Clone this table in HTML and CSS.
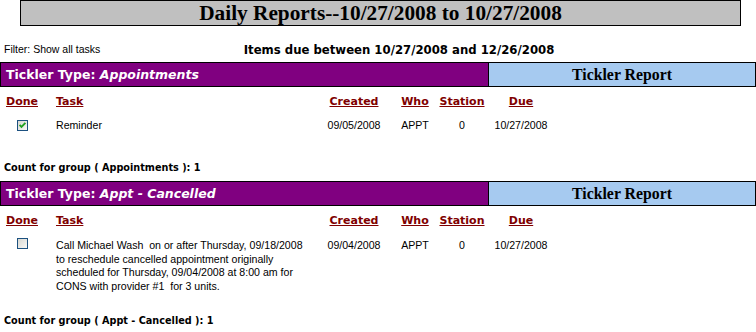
FILE: index.html
```html
<!DOCTYPE html>
<html>
<head>
<meta charset="utf-8">
<link rel="stylesheet" href="styles.css">
</head>
<body>
<div class="title">Daily Reports--10/27/2008 to 10/27/2008</div>
<div class="subhead">
  <div class="filter">Filter: Show all tasks</div>
  <div class="items">Items due between 10/27/2008 and 12/26/2008</div>
</div>

<div class="group first">
  <div class="bar">
    <div class="type">Tickler Type: <i>Appointments</i></div>
    <div class="report">Tickler Report</div>
  </div>
  <div class="grid heads">
    <div class="c"><u>Done</u></div>
    <div class="task"><u>Task</u></div>
    <div class="c"><u>Created</u></div>
    <div class="c"><u>Who</u></div>
    <div class="c"><u>Station</u></div>
    <div class="c"><u>Due</u></div>
    <div></div>
  </div>
  <div class="grid row">
    <div class="done"><svg class="cb" width="11" height="11" viewBox="0 0 11 11"><defs><linearGradient id="g1" x1="0" y1="0" x2="1" y2="1"><stop offset="0" stop-color="#d6d6d0"/><stop offset="1" stop-color="#fafaf8"/></linearGradient></defs><rect x="0.5" y="0.5" width="10" height="10" fill="url(#g1)" stroke="#1c5180"/><polyline points="2.6,4.8 4.5,6.8 8.4,2.9" fill="none" stroke="#21a121" stroke-width="1.9"/></svg></div>
    <div class="task">Reminder</div>
    <div class="c">09/05/2008</div>
    <div class="c">APPT</div>
    <div class="c">0</div>
    <div class="c">10/27/2008</div>
    <div></div>
  </div>
  <div class="count">Count for group ( Appointments ): 1</div>
</div>

<div class="group second">
  <div class="bar">
    <div class="type">Tickler Type: <i>Appt - Cancelled</i></div>
    <div class="report">Tickler Report</div>
  </div>
  <div class="grid heads">
    <div class="c"><u>Done</u></div>
    <div class="task"><u>Task</u></div>
    <div class="c"><u>Created</u></div>
    <div class="c"><u>Who</u></div>
    <div class="c"><u>Station</u></div>
    <div class="c"><u>Due</u></div>
    <div></div>
  </div>
  <div class="grid row">
    <div class="done"><svg class="cb" width="11" height="11" viewBox="0 0 11 11"><defs><linearGradient id="g2" x1="0" y1="0" x2="1" y2="1"><stop offset="0" stop-color="#d6d6d0"/><stop offset="1" stop-color="#fafaf8"/></linearGradient></defs><rect x="0.5" y="0.5" width="10" height="10" fill="url(#g2)" stroke="#1c5180"/></svg></div>
    <div class="task">Call Michael Wash&nbsp; on or after Thursday, 09/18/2008 to reschedule cancelled appointment originally scheduled for Thursday, 09/04/2008 at 8:00 am for CONS with provider #1&nbsp; for 3 units.</div>
    <div class="c">09/04/2008</div>
    <div class="c">APPT</div>
    <div class="c">0</div>
    <div class="c">10/27/2008</div>
    <div></div>
  </div>
  <div class="count">Count for group ( Appt - Cancelled ): 1</div>
</div>
</body>
</html>
```

FILE: styles.css
```css
html, body {
  margin: 0;
  padding: 0;
  background: #ffffff;
}
body {
  font-family: "Liberation Sans", Arial, sans-serif;
  font-size: 11px;
  color: #000;
}
.title {
  margin: 0 15px 0 20px;
  height: 24px;
  border: 1px solid #000;
  background: #c0c0c0;
  font-family: "Liberation Serif", "Times New Roman", serif;
  font-weight: bold;
  font-size: 21.3px;
  line-height: 25px;
  text-align: center;
}
.subhead {
  display: flex;
  align-items: center;
  height: 20px;
  margin-top: 14px;
}
.filter {
  width: 0;
  white-space: nowrap;
  padding-left: 4px;
  font-size: 10.5px;
  margin-top: -2px;
}
.items {
  flex: 1;
  text-align: center;
  font-family: "DejaVu Sans", Verdana, sans-serif;
  font-weight: bold;
  font-size: 11.7px;
  padding-left: 38px;
}
.first {
  margin-top: 2px;
}
.bar {
  display: flex;
  height: 23px;
  border: 1px solid #000;
}
.type {
  width: 488px;
  background: #800080;
  color: #fff;
  font-family: "DejaVu Sans", Verdana, sans-serif;
  font-weight: bold;
  font-size: 12.5px;
  line-height: 24px;
  padding-left: 5px;
  box-sizing: border-box;
  border-right: 1px solid #000;
}
.report {
  flex: 1;
  background: #a6caf0;
  font-family: "Liberation Serif", "Times New Roman", serif;
  font-weight: bold;
  font-size: 15.8px;
  line-height: 24px;
  text-align: center;
}
.grid {
  display: grid;
  grid-template-columns: 44px 272px 76px 46px 48px 70px 1fr;
}
.heads {
  margin-top: 6px;
  height: 16px;
  align-items: center;
  color: #800000;
  font-family: "DejaVu Sans", Verdana, sans-serif;
  font-weight: bold;
  font-size: 11px;
}
.heads u {
  text-decoration-thickness: 1px;
}
.row {
  margin-top: 10px;
  line-height: 13.6px;
  font-size: 10.6px;
  align-items: start;
}
.second .row {
  margin-top: 11px;
}
.c {
  text-align: center;
}
.done {
  min-height: 22px;
}
.task {
  padding-left: 12px;
  padding-right: 4px;
}
.cb {
  display: block;
  margin: 0 auto;
}
.first .cb {
  margin-top: 1px;
}
.second .cb {
  margin-top: -1px;
}
.count {
  font-family: "DejaVu Sans", Verdana, sans-serif;
  font-weight: bold;
  font-size: 9.7px;
  padding-left: 4px;
  margin-top: 17px;
  margin-bottom: 3px;
  height: 20px;
  line-height: 20px;
}
.second .count {
  margin-top: 18px;
}
```
